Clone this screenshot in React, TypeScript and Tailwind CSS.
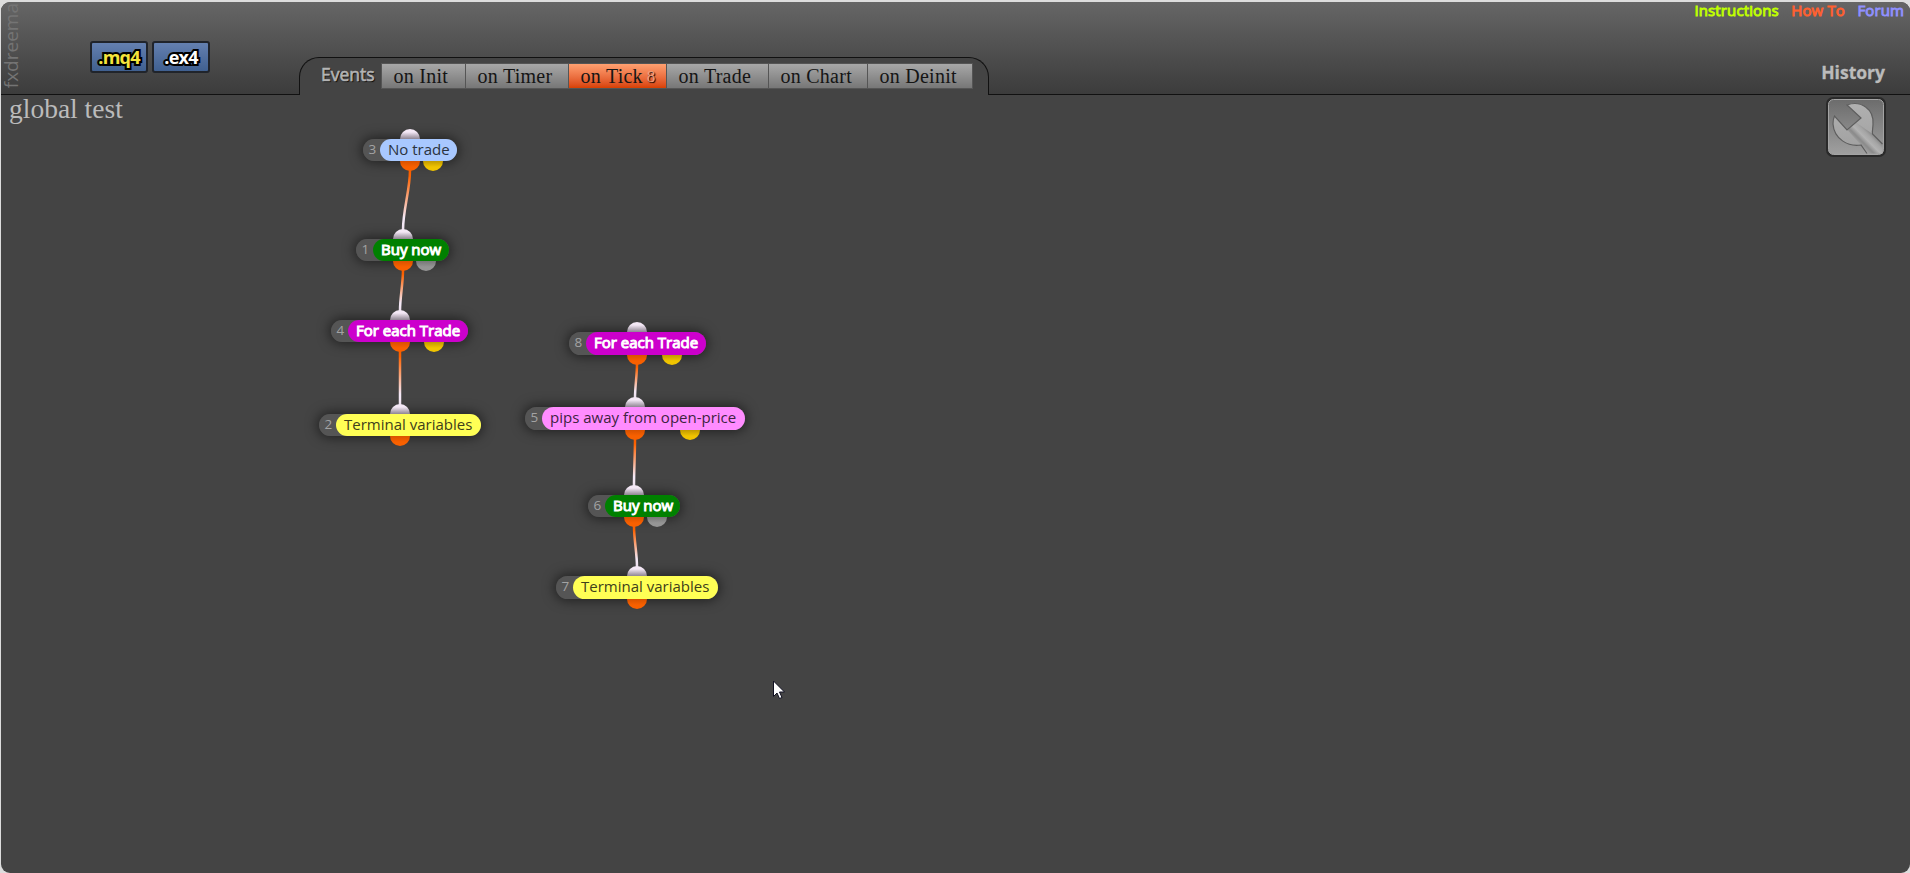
import clsx from "clsx";

type NodeKind = "condition" | "trade" | "loop" | "variables" | "filter";

interface Port {
  x: number;
  color: "orange" | "yellow" | "gray";
}

interface BlockNode {
  id: number;
  title: string;
  kind: NodeKind;
  x: number;
  y: number;
  width: number;
  height: number;
  input: number;
  outputs: Port[];
}

// coordinates are relative to the canvas below the header
const nodes: BlockNode[] = [
  { id: 3, title: "No trade", kind: "condition", x: 362, y: 44, width: 94, height: 22, input: 47, outputs: [{ x: 47, color: "orange" }, { x: 70, color: "yellow" }] },
  { id: 1, title: "Buy now", kind: "trade", x: 355, y: 144, width: 93, height: 22, input: 47, outputs: [{ x: 47, color: "orange" }, { x: 70, color: "gray" }] },
  { id: 4, title: "For each Trade", kind: "loop", x: 330, y: 225, width: 137, height: 22, input: 69, outputs: [{ x: 69, color: "orange" }, { x: 103, color: "yellow" }] },
  { id: 2, title: "Terminal variables", kind: "variables", x: 318, y: 319, width: 162, height: 22, input: 81, outputs: [{ x: 81, color: "orange" }] },
  { id: 8, title: "For each Trade", kind: "loop", x: 568, y: 237, width: 137, height: 23, input: 68, outputs: [{ x: 68, color: "orange" }, { x: 103, color: "yellow" }] },
  { id: 5, title: "pips away from open-price", kind: "filter", x: 524, y: 312, width: 220, height: 23, input: 110, outputs: [{ x: 110, color: "orange" }, { x: 165, color: "yellow" }] },
  { id: 6, title: "Buy now", kind: "trade", x: 587, y: 400, width: 92, height: 22, input: 46, outputs: [{ x: 46, color: "orange" }, { x: 69, color: "gray" }] },
  { id: 7, title: "Terminal variables", kind: "variables", x: 555, y: 481, width: 162, height: 23, input: 81, outputs: [{ x: 81, color: "orange" }] },
];

const links = [
  [3, 1],
  [1, 4],
  [4, 2],
  [8, 5],
  [5, 6],
  [6, 7],
];

const tabs = [
  { label: "on Init", width: "w-[84px]" },
  { label: "on Timer", width: "w-[103px]" },
  { label: "on Tick", width: "w-[98px]", badge: 8 },
  { label: "on Trade", width: "w-[102px]" },
  { label: "on Chart", width: "w-[99px]" },
  { label: "on Deinit", width: "w-[104px]" },
];

const kindClass: Record<NodeKind, string> = {
  condition: "bg-[#a8c8ff] pl-2 text-[#2b3340]",
  trade: "bg-[#008000] pl-2 text-white [-webkit-text-stroke:1px_white]",
  loop: "bg-[#cc00cc] pl-2 text-white [-webkit-text-stroke:1px_white]",
  variables: "bg-[#ffff55] pl-2 text-[#40401a]",
  filter: "bg-[#ff8cff] pl-2 text-[#40233f]",
};

const portClass = {
  orange: "from-[#d85200] to-[#f86000]",
  yellow: "from-[#c09a00] to-[#f0c400]",
  gray: "from-[#777777] to-[#959595]",
};

function Block({ node }: { node: BlockNode }) {
  return (
    <div
      className="absolute"
      style={{ left: node.x, top: node.y, width: node.width, height: node.height }}
    >
      <div className="absolute inset-0 rounded-full shadow-[0_0_12px_2px_rgba(0,0,0,0.5)]" />
      <div
        className="absolute -top-[10px] h-[10px] w-5 -translate-x-1/2 rounded-t-full bg-linear-to-b from-[#f4e8f6] from-30% to-[#8f8592]"
        style={{ left: node.input }}
      />
      {node.outputs.map((port) => (
        <div
          key={port.color}
          className={clsx("absolute top-full h-[10px] w-5 -translate-x-1/2 rounded-b-full bg-linear-to-b to-60%", portClass[port.color])}
          style={{ left: port.x }}
        />
      ))}
      <div className="relative flex h-full rounded-full bg-[#555555]">
        <span className="w-[17px] shrink-0 pl-[5.5px] text-[13.5px] leading-[21px] text-[#a3a3a3]">{node.id}</span>
        <span className={clsx("flex-1 rounded-full text-[15px] leading-5 whitespace-nowrap", kindClass[node.kind])}>
          {node.title}
        </span>
      </div>
    </div>
  );
}

function Links() {
  const find = (id: number) => nodes.find((n) => n.id === id)!;

  return (
    <svg className="absolute inset-0 h-full w-full" fill="none">
      {links.map(([fromId, toId]) => {
        const from = find(fromId);
        const to = find(toId);
        const x1 = from.x + from.outputs[0].x;
        const y1 = from.y + from.height + 9;
        const x2 = to.x + to.input;
        const y2 = to.y - 9;
        const bend = (y2 - y1) / 3;
        const id = `link-${fromId}-${toId}`;
        return (
          <g key={id}>
            <defs>
              <linearGradient id={id} gradientUnits="userSpaceOnUse" x1={x1} y1={y1} x2={x1} y2={y2}>
                <stop offset="0.1" stopColor="#ff6200" />
                <stop offset="0.8" stopColor="#f4e8f6" />
              </linearGradient>
            </defs>
            <path
              d={`M${x1} ${y1}C${x1} ${y1 + bend} ${x2} ${y2 - bend} ${x2} ${y2}`}
              stroke={`url(#${id})`}
              strokeWidth="2.5"
            />
          </g>
        );
      })}
    </svg>
  );
}

function FileButton({ label, className }: { label: string; className: string }) {
  return (
    <button className="h-8 w-[58px] rounded-[3px] border-2 border-[#20242b] bg-linear-to-b from-[#6480b0] to-[#406090] pb-px text-center leading-none">
      <span
        className={clsx(
          "text-[18px] font-bold tracking-[-0.8px] [-webkit-text-stroke:4px_black] [paint-order:stroke_fill]",
          className
        )}
      >
        {label}
      </span>
    </button>
  );
}

function Wrench() {
  return (
    <svg className="block size-[60px]" viewBox="0 0 60 60">
      <defs>
        <linearGradient id="wrench-bg" x1="0" y1="0" x2="0" y2="1">
          <stop offset="0" stopColor="#6c6c6c" />
          <stop offset="1" stopColor="#a0a0a0" />
        </linearGradient>
        <linearGradient id="wrench-head" x1="0" y1="0" x2="0" y2="1">
          <stop offset="0" stopColor="#b0b0b0" />
          <stop offset="1" stopColor="#a0a0a0" />
        </linearGradient>
        <linearGradient id="wrench-handle" gradientUnits="userSpaceOnUse" x1="32" y1="47" x2="45" y2="34">
          <stop offset="0" stopColor="#a4a4a4" />
          <stop offset="0.25" stopColor="#8a8a8a" />
          <stop offset="0.5" stopColor="#b2b2b2" />
          <stop offset="0.75" stopColor="#a4a4a4" />
          <stop offset="1" stopColor="#808080" />
        </linearGradient>
      </defs>
      <rect width="60" height="60" rx="7" fill="#2a2a2a" />
      <rect x="2.5" y="2.5" width="55" height="55" rx="5" fill="url(#wrench-bg)" stroke="#a4a4a4" />
      <path
        d="M21 8C35 3 48 12 47 27C47 31 46 34 46.5 37L56.5 47V56.5H41L35 48C22 50 8 42 7 27C7 24 7.5 21 8.5 19L21 33L35 21Z"
        fill="url(#wrench-head)"
      />
      <path d="M21.5 33L30 25.5L46.5 37L56.5 47V56.5H42L35 48Z" fill="url(#wrench-handle)" />
      <path
        d="M56.5 47L46.5 37C46 34 47 31 47 27C48 12 35 3 21 8L35 21L21 33L8.5 19C7.5 21 7 24 7 27C8 42 22 50 35 48L41 56.5"
        fill="none"
        stroke="#5e5e5e"
        strokeWidth="1.2"
      />
    </svg>
  );
}

function Header() {
  return (
    <header className="flex h-[93px] rounded-t-[9px] border-b border-[#111111] bg-linear-to-b from-[#666666] to-[#3c3c3c]">
      <div className="flex h-full w-[89px] items-end pb-[6px]">
        <span className="rotate-180 text-[19px] leading-5 text-[#747474] [writing-mode:vertical-rl]">fxdreema</span>
      </div>
      <div className="flex gap-1 pt-[39px]">
        <FileButton label=".mq4" className="text-[#f5e53c]" />
        <FileButton label=".ex4" className="text-white" />
      </div>
      <nav className="mt-[55px] ml-[89px] flex h-[38px] w-[690px] rounded-t-[20px] border border-b-0 border-[#111111] bg-[#444444] pt-[5px] pl-[21px]">
        <span className="w-[60px] text-[17.5px] leading-[22px] text-[#b4b4b4] [-webkit-text-stroke:0.6px_#b4b4b4] [text-shadow:1px_1px_1px_black]">
          Events
        </span>
        <div className="flex h-[26px] border border-[#555555]">
          {tabs.map((tab) => (
            <button
              key={tab.label}
              className={clsx(
                "flex border-r border-[#555555] bg-linear-to-b pl-[11.5px] font-['Liberation_Serif',serif] text-[20px] leading-6 tracking-[0.25px] whitespace-nowrap text-[#151515] last:border-r-0",
                tab.width,
                tab.badge ? "from-[#ffa070] to-[#d84000]" : "from-[#a8a8a8] to-[#777777]"
              )}
            >
              {tab.label}
              {tab.badge && (
                <span className="ml-1 pt-[2px] text-[17px] leading-[22px] text-[#f0a080] [text-shadow:1px_1px_1px_black]">{tab.badge}</span>
              )}
            </button>
          ))}
        </div>
      </nav>
      <div className="ml-auto flex flex-col items-end">
        <div className="flex gap-[12.5px] pr-[6px] text-[15px] leading-4 tracking-[0.12px]">
          <a className="text-[#c0ff00] [-webkit-text-stroke:0.9px_#c0ff00]">Instructions</a>
          <a className="text-[#ff6030] [-webkit-text-stroke:0.9px_#ff6030]">How To</a>
          <a className="text-[#9090ff] [-webkit-text-stroke:0.9px_#9090ff]">Forum</a>
        </div>
        <span className="mt-[42px] pr-[25px] text-[17.5px] leading-6 font-bold text-[#bbbbbb] [-webkit-text-stroke:0.3px_#bbbbbb]">
          History
        </span>
      </div>
    </header>
  );
}

export default function App() {
  return (
    <div className="h-[873px] w-[1910px] bg-[#dddddd] pt-[2px] pl-px font-['Open_Sans',sans-serif]">
      <div className="h-[871px] w-[1909px] rounded-[9px] bg-[#444444]">
        <Header />
        <main className="relative flex h-[778px] items-start justify-between pl-2">
          <h1 className="font-['Liberation_Serif',serif] text-[27.5px] leading-7 text-[#bbbbbb]">global test</h1>
          <button className="mt-[2px] mr-[24px]">
            <Wrench />
          </button>
          <Links />
          {nodes.map((node) => (
            <Block key={node.id} node={node} />
          ))}
          {/* mouse pointer */}
          <svg className="absolute top-[585px] left-[772px] h-5 w-3" viewBox="0 0 12 20">
            <path d="M.5 1V16.5L4 13L6.5 18.5L9 17.5L6.5 12H11.5Z" fill="white" stroke="#111122" />
          </svg>
        </main>
      </div>
    </div>
  );
}
